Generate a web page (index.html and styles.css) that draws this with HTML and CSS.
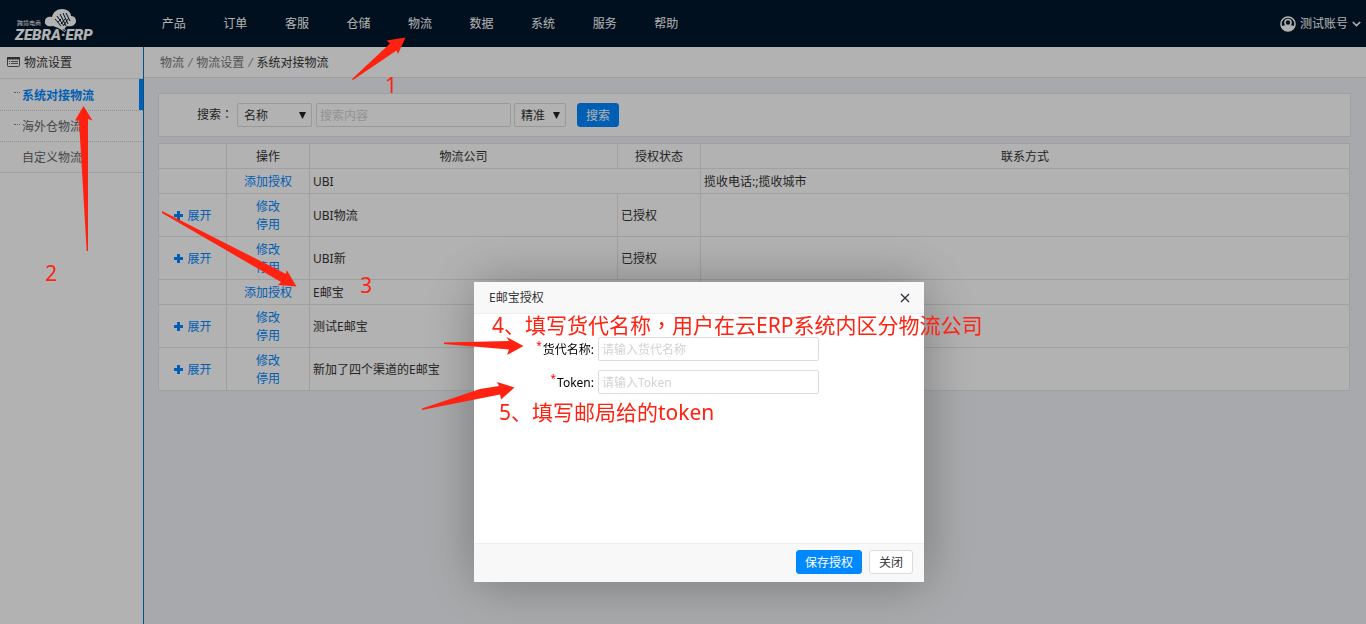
FILE: index.html
```html
<!DOCTYPE html>
<html lang="zh-CN">
<head>
    <meta charset="UTF-8">
    <meta name="viewport" content="width=device-width, initial-scale=1.0">
    <title>系统对接物流</title>
    <link rel="stylesheet" href="styles.css">
</head>
<body>
    <header class="header">
        <a href="#" class="logo" aria-label="ZEBRA ERP">
            <svg width="90" height="38" viewBox="0 0 90 38">
                <path class="cloud" d="M39 19c-5 1-9-1-8-5 0-3 3-5 7-4 1-5 5-8 10-8 5 0 9 3 9 7 4 0 5 3 5 5 0 4-4 6-9 5l-4 4z"/>
                <path class="stripes" d="M41 12l6 7M43 9l7 10M46 7l6 12M49 6l5 11M52 6l4 8M44 15l3-3M47 17l4-5M50 18l4-6"/>
                <path class="tail" d="M44 20l7 5M48 19l4 5"/>
                <text class="logo-small" x="3" y="18">跨境电商</text>
                <text class="logo-big" x="1" y="33">ZEBRA·ERP</text>
            </svg>
        </a>
        <nav class="nav">
            <a href="#">产品</a>
            <a href="#">订单</a>
            <a href="#">客服</a>
            <a href="#">仓储</a>
            <a href="#">物流</a>
            <a href="#">数据</a>
            <a href="#">系统</a>
            <a href="#">服务</a>
            <a href="#">帮助</a>
        </nav>
        <a href="#" class="account">
            <svg width="16" height="16" viewBox="0 0 16 16">
                <circle cx="8" cy="8" r="7" fill="none" stroke="#fff" stroke-width="1.6"/>
                <circle cx="8" cy="6.5" r="3" fill="none" stroke="#fff" stroke-width="1.6"/>
                <path d="M1.500 10.500c1.500-.9 2.500-1.200 4-1.200 1.500 1 3.500 1 5 0 1.500 0 2.500.3 4 1.200A7 7 0 0 1 1.500 10.500z" fill="#fff"/>
            </svg>
            测试账号
            <svg width="9" height="6" viewBox="0 0 9 6"><path d="M.8 1l3.700 3.600L8.200 1" fill="none" stroke="#fff" stroke-width="1.600"/></svg>
        </a>
    </header>

    <div class="main">
        <aside class="sidebar">
            <h2 class="side-title">
                <svg width="13" height="11" viewBox="0 0 13 11">
                    <rect x=".5" y=".5" width="12" height="9" rx="1" fill="none" stroke="#555"/>
                    <path d="M0 0h13v2.500H0z" fill="#444"/>
                    <path d="M2 4.500h1M4 4.500h7M2 6.500h1M4 6.500h7" stroke="#666"/>
                </svg>
                物流设置
            </h2>
            <ul class="side-menu">
                <li class="active dots"><a href="#">系统对接物流</a></li>
                <li class="dots"><a href="#">海外仓物流</a></li>
                <li><a href="#">自定义物流</a></li>
            </ul>
        </aside>

        <div class="content">
            <div class="breadcrumb">
                <a href="#">物流</a><i>/</i><a href="#">物流设置</a><i>/</i><span>系统对接物流</span>
            </div>

            <form class="search">
                <label for="field">搜索<span class="punct" lang="zh-TW">：</span></label>
                <select id="field" class="field">
                    <option>名称</option>
                </select>
                <input type="text" class="keyword" placeholder="搜索内容" aria-label="搜索内容">
                <select class="match" aria-label="精准">
                    <option>精准</option>
                </select>
                <button type="button" class="btn primary">搜索</button>
            </form>

            <table class="list">
                <colgroup>
                    <col class="col-open"><col class="col-action"><col class="col-company"><col class="col-status"><col>
                </colgroup>
                <tr><th></th><th>操作</th><th>物流公司</th><th>授权状态</th><th>联系方式</th></tr>
                <tr>
                    <td></td>
                    <td class="center"><a href="#">添加授权</a></td>
                    <td colspan="2">UBI</td>
                    <td>揽收电话:;揽收城市</td>
                </tr>
                <tr>
                    <td class="center"><a href="#" class="open">展开</a></td>
                    <td class="center"><a href="#">修改</a><br><a href="#">停用</a></td>
                    <td>UBI物流</td>
                    <td>已授权</td>
                    <td></td>
                </tr>
                <tr>
                    <td class="center"><a href="#" class="open">展开</a></td>
                    <td class="center"><a href="#">修改</a><br><a href="#">停用</a></td>
                    <td>UBI新</td>
                    <td>已授权</td>
                    <td></td>
                </tr>
                <tr>
                    <td></td>
                    <td class="center"><a href="#">添加授权</a></td>
                    <td colspan="2">E邮宝</td>
                    <td></td>
                </tr>
                <tr>
                    <td class="center"><a href="#" class="open">展开</a></td>
                    <td class="center"><a href="#">修改</a><br><a href="#">停用</a></td>
                    <td>测试E邮宝</td>
                    <td></td>
                    <td></td>
                </tr>
                <tr>
                    <td class="center"><a href="#" class="open">展开</a></td>
                    <td class="center"><a href="#">修改</a><br><a href="#">停用</a></td>
                    <td>新加了四个渠道的E邮宝</td>
                    <td></td>
                    <td></td>
                </tr>
            </table>
        </div>
    </div>

    <div class="shade"></div>

    <div class="dialog" role="dialog">
        <div class="dialog-title">
            <span>E邮宝授权</span>
            <button type="button" class="close" aria-label="关闭">
                <svg width="10" height="10" viewBox="0 0 10 10"><path d="M1 1l8 8M9 1L1 9" stroke="#2e2d3c" stroke-width="1.300"/></svg>
            </button>
        </div>
        <form class="dialog-body">
            <div class="row">
                <label for="agent"><sup>*</sup>货代名称:</label>
                <input type="text" id="agent" placeholder="请输入货代名称">
            </div>
            <div class="row">
                <label for="token"><sup>*</sup>Token:</label>
                <input type="text" id="token" placeholder="请输入Token">
            </div>
        </form>
        <div class="dialog-foot">
            <button type="button" class="btn primary">保存授权</button>
            <button type="button" class="btn">关闭</button>
        </div>
    </div>

    <!-- step marks over the page -->
    <div class="marks">
        <svg width="1366" height="624" viewBox="0 0 1366 624">
            <path d="M352 79L390 43.500L386.500 40.500L405.500 37.500L398 54L396.500 50.500L353 80z"/>
            <path d="M86.700 251L79 120.500L75 120.500L83.500 106L92.500 120.500L88 119L88 251z"/>
            <path d="M162 211L286 274L286.700 270L296.500 286.500L278 285L281 282L162 213z"/>
            <path d="M444 342.500L509 341L506.500 337L523.500 346L507 355L509 349.500L444 344z"/>
            <path d="M422 408.500L480 389L499 386L497 382L514.500 387.500L501 399.500L500 394.500L422 410z"/>
        </svg>
        <span class="mark m1">1</span>
        <span class="mark m2">2</span>
        <span class="mark m3">3</span>
        <span class="mark m4">4、填写货代名称<span class="punct" lang="zh-TW">，</span>用户在云ERP系统内区分物流公司</span>
        <span class="mark m5">5、填写邮局给的token</span>
    </div>
</body>
</html>
```
FILE: styles.css
```css
* {
    box-sizing: border-box;
}

body {
    display: flex;
    flex-direction: column;
    min-height: 100vh;
    margin: 0;
    background-color: #f1f3f6;
    color: #333;
    font: 12px/18px "Noto Sans", "Noto Sans CJK SC", sans-serif;
}

a {
    color: #0088ff;
    text-decoration: none;
}

input,
select,
button {
    height: 24px;
    border: 1px solid #dcdcdc;
    border-radius: 2px;
    background-color: #fff;
    color: #333;
    font: inherit;
}

input {
    padding: 1px 3px 0;
}

input::placeholder {
    color: #d2d2d2;
}

.btn {
    padding: 1px 9px 0;
    border-radius: 3px;
    cursor: pointer;
}

.primary {
    padding: 1px 8px 0;
    border-color: #0088ff;
    background-color: #0088ff;
    color: #fff;
}

/* centred full width punctuation */
.punct {
    font-family: "Noto Sans CJK TC", sans-serif;
    line-height: 1;
}

/* header */
.header {
    display: flex;
    align-items: center;
    height: 47px;
    padding-top: 1px;
    background-color: #00172b;
}

.header a {
    color: #fff;
}

.logo {
    width: 143px;
    height: 34px;
    padding-left: 14px;
}

.cloud {
    fill: #fff;
}

.stripes {
    fill: none;
    stroke: #00172b;
    stroke-width: 1;
}

.tail {
    fill: none;
    stroke: #fff;
    stroke-width: 1;
}

.logo-small {
    fill: #fff;
    font-size: 6px;
}

.logo-big {
    fill: #fff;
    font: italic 900 15px Roboto, sans-serif;
}

.nav {
    display: grid;
    grid-template-columns: repeat(9, 1fr);
    width: 554px;
    text-align: center;
}

.account {
    display: flex;
    align-items: center;
    gap: 4px;
    margin-left: auto;
    padding-right: 5px;
}

/* left menu */
.main {
    display: flex;
    flex: 1;
}

.sidebar {
    width: 144px;
    border-right: 1px solid #0076c8;
    background-color: #fff;
}

.side-title {
    display: flex;
    align-items: center;
    gap: 4px;
    height: 32px;
    margin: 0;
    padding-left: 7px;
    border-bottom: 1px solid #e4e4e4;
    font-size: 12px;
    font-weight: normal;
}

.side-menu {
    margin: 0;
    padding: 0;
    border-bottom: 1px solid #e4e4e4;
    list-style: none;
}

.side-menu li {
    display: flex;
    align-items: center;
    height: 31px;
    padding: 2px 0 0 14px;
}

.side-menu li + li {
    border-top: 1px dotted #d2d2d2;
}

.side-menu li::before {
    width: 8px;
    height: 6px;
    content: "";
}

.side-menu .dots::before {
    width: 6px;
    margin-right: 2px;
    border-top: 1px dotted #888;
}

.side-menu a {
    color: #666;
}

.side-menu .active {
    border-right: 4px solid #0088ff;
}

.side-menu .active a {
    color: #0088ff;
    font-weight: bold;
}

/* content */
.content {
    flex: 1;
}

.breadcrumb {
    height: 31px;
    padding: 7px 16px 5px;
    border-bottom: 1px solid #e6e6e6;
    background-color: #fff;
}

.breadcrumb a {
    color: #777;
}

.breadcrumb i {
    margin: 0 4px;
    color: #999;
}

.search {
    display: flex;
    align-items: center;
    height: 44px;
    margin: 15px 15px 6px 14px;
    padding-left: 38px;
    border: 1px solid #e6e6e6;
    background-color: #fff;
}

.search select {
    padding: 1px 6px 0;
    appearance: none;
    background: #fff url("data:image/svg+xml,%3Csvg xmlns='http://www.w3.org/2000/svg' width='7' height='7'%3E%3Cpath d='M0 0h7L3.500 7z' fill='%23222'/%3E%3C/svg%3E") no-repeat right 5px center;
}

.search .field {
    width: 75px;
    margin: 0 4px;
}

.search .keyword {
    width: 195px;
    margin-right: 3px;
}

.search .match {
    width: 52px;
    margin-right: 11px;
}

.list {
    width: calc(100% - 30px);
    margin: 0 15px 0 14px;
    border-collapse: collapse;
    table-layout: fixed;
    background-color: #fff;
}

.list th,
.list td {
    height: 25px;
    padding: 4px 3px 2px;
    border: 1px solid #e6e6e6;
    font-weight: normal;
}

.col-open {
    width: 68px;
}

.col-action,
.col-status {
    width: 83px;
}

.col-company {
    width: 308px;
}

.center {
    text-align: center;
}

.open::before {
    display: inline-block;
    width: 10px;
    height: 9px;
    margin-right: 4px;
    background: linear-gradient(#0088ff, #0088ff) center / 9px 3px no-repeat, linear-gradient(#0088ff, #0088ff) center / 3px 9px no-repeat;
    content: "";
}

/* dialog */
.shade {
    position: fixed;
    inset: 0;
    background-color: rgba(0, 0, 0, 0.3);
}

.dialog {
    position: fixed;
    top: 282px;
    left: calc(50% - 209px);
    display: flex;
    flex-direction: column;
    width: 450px;
    height: 300px;
    background-color: #fff;
    box-shadow: 1px 1px 50px rgba(0, 0, 0, 0.3);
}

.dialog-title {
    display: flex;
    align-items: center;
    justify-content: space-between;
    height: 32px;
    padding: 0 14px 0 15px;
    border-bottom: 1px solid #eee;
    background-color: #f8f8f8;
}

.close {
    display: flex;
    align-items: center;
    padding: 0;
    border: none;
    background: none;
}

.dialog-body {
    flex: 1;
    padding-top: 23px;
}

.row {
    display: flex;
    align-items: center;
    gap: 4px;
    margin-bottom: 9px;
}

.row label {
    width: 120px;
    padding-top: 2px;
    color: #000;
    text-align: right;
}

.row sup {
    margin-right: 1px;
    color: #f00;
    line-height: 0;
}

.row input {
    width: 221px;
}

.dialog-foot {
    display: flex;
    align-items: center;
    justify-content: flex-end;
    gap: 7px;
    height: 39px;
    padding: 0 11px 2px 0;
    border-top: 1px solid #eee;
    background-color: #f8f8f8;
}

/* step marks */
.marks {
    position: absolute;
    inset: 0;
    overflow: hidden;
    pointer-events: none;
}

.marks svg {
    fill: #ff2211;
}

.mark {
    position: absolute;
    color: #ff2211;
    font-size: 21px;
    line-height: 28px;
    white-space: nowrap;
}

.m1 {
    top: 71px;
    left: 385px;
}

.m2 {
    top: 259px;
    left: 45px;
}

.m3 {
    top: 271px;
    left: 360px;
}

.m4 {
    top: 311px;
    left: 492px;
}

.m5 {
    top: 398px;
    left: 499px;
}
```
